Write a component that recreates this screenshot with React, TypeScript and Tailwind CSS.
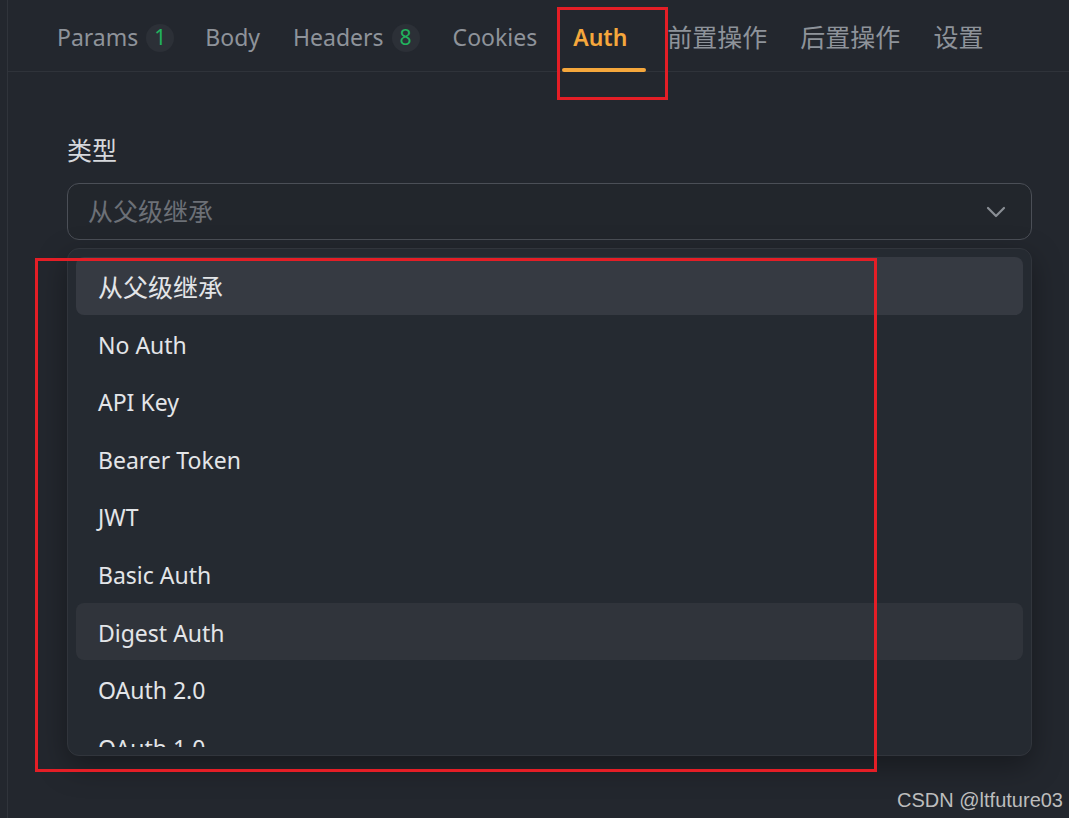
import React from "react";

const items = [
  "从父级继承",
  "No Auth",
  "API Key",
  "Bearer Token",
  "JWT",
  "Basic Auth",
  "Digest Auth",
  "OAuth 2.0",
  "OAuth 1.0",
];

function Badge({ n }: { n: string }) {
  return (
    <span className="ml-[8px] flex h-[28px] w-[28px] items-center justify-center rounded-full bg-[#2c3037] text-[21px] leading-none text-[#22b35e]">
      {n}
    </span>
  );
}

export default function App() {
  const font = { fontFamily: '"Noto Sans", "Noto Sans CJK SC", sans-serif' };
  return (
    <div className="relative flex h-[818px] w-[1069px] overflow-hidden bg-[#23272e]" style={font}>
      <div className="w-[8px] shrink-0 border-r border-[#30343b]" />
      <div className="flex min-w-0 flex-1 flex-col">
        {/* Tabs */}
        <div className="flex h-[72px] items-end border-b border-[#2f333a] pl-[49px]">
          <div className="flex h-full items-center gap-[33px] pt-[4px] text-[23px] text-[#8e939a]">
            <div className="flex items-center">
              <span>Params</span>
              <Badge n="1" />
            </div>
            <span className="-ml-[2px]">Body</span>
            <div className="flex items-center">
              <span>Headers</span>
              <Badge n="8" />
            </div>
            <span>Cookies</span>
            <div className="relative ml-[3px] mr-[7px] flex h-full items-center font-semibold text-[#f5a73c]">
              <span>Auth</span>
              <span className="absolute bottom-[-1px] left-[-11px] right-[-19px] h-[4px] rounded-full bg-[#f5a73c]" />
            </div>
            <span className="text-[25px]">前置操作</span>
            <span className="text-[25px]">后置操作</span>
            <span className="text-[25px]">设置</span>
          </div>
        </div>

        {/* Body */}
        <div className="flex flex-col pl-[59px] pr-[37px] pt-[62px]">
          <div className="h-[32px] text-[25px] leading-[32px] text-[#d6d8dc]">类型</div>
          <div className="mt-[17px] flex h-[57px] items-center justify-between rounded-[12px] border border-[#4b4f57] bg-[#22262c] pl-[20px] pr-[25px]">
            <span className="text-[25px] text-[#6c7077]">从父级继承</span>
            <svg width="20" height="12" viewBox="0 0 20 12" fill="none">
              <path d="M2 2l8 8 8-8" stroke="#8a8e95" strokeWidth="2.2" strokeLinecap="round" strokeLinejoin="round" />
            </svg>
          </div>
          <div className="mt-[8px] h-[508px] rounded-[12px] border border-[#31353c] bg-[#252a31] p-[8px] shadow-[0_10px_30px_rgba(0,0,0,0.35)]">
            <div className="h-full overflow-hidden">
              {items.map((it, i) => (
                <div
                  key={it}
                  className={
                    "flex h-[57.6px] items-center rounded-[8px] pl-[22px] pt-[3px] text-[#e3e5e8] " +
                    (i === 0 ? "text-[25px] " : "text-[23px] ") +
                    (i === 0 ? "bg-[#363a42]" : i === 6 ? "bg-[#30343b]" : "")
                  }
                >
                  {it}
                </div>
              ))}
            </div>
          </div>
        </div>
      </div>

      {/* annotation overlays */}
      <div className="pointer-events-none absolute left-[557px] top-[7px] h-[93px] w-[111px] border-[3px] border-[#e41e26]" />
      <div className="pointer-events-none absolute left-[35px] top-[258px] h-[514px] w-[842px] border-[3px] border-[#e41e26]" />
      <div
        className="absolute right-[6px] top-[787px] text-[20px] leading-[26px] text-[#bdbdbd]"
        style={{ fontFamily: '"Liberation Sans", Arial, sans-serif' }}
      >
        CSDN @ltfuture03
      </div>
    </div>
  );
}
